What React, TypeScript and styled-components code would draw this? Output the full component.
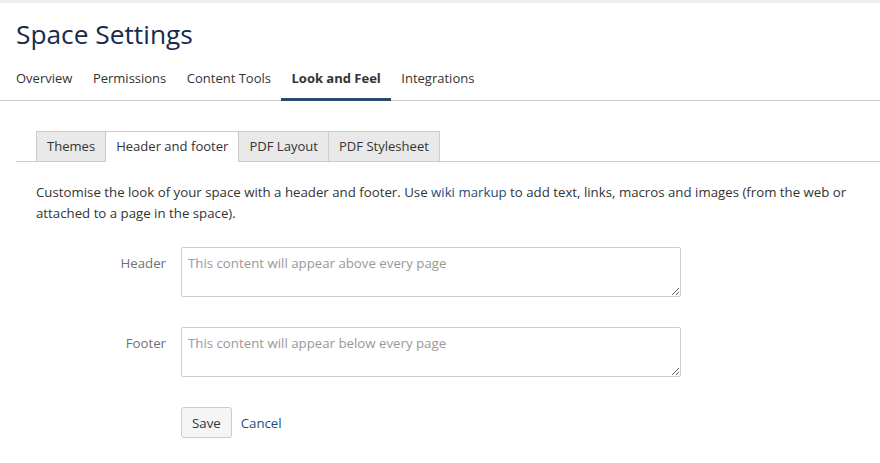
import styled, { createGlobalStyle } from "styled-components";

const GlobalStyle = createGlobalStyle`
  html, body {
    margin: 0;
    padding: 0;
    background: #fff;
  }
  body {
    font-family: "Open Sans", "Noto Sans", sans-serif;
    font-size: 13.25px;
    color: #333;
  }
`;

const Page = styled.div`
  border-top: 3px solid #ededed;
  min-height: 460px;
`;

const Title = styled.h1`
  margin: 0;
  padding: 14px 16px 0;
  font-size: 26.3px;
  font-weight: 400;
  color: #172b4d;
  line-height: 34px;
`;

const Nav = styled.nav`
  display: flex;
  gap: 20.5px;
  margin-top: 17px;
  padding: 0 16px;
  border-bottom: 1px solid #ccc;
  font-size: 13px;
`;

const NavItem = styled.a<{ $active?: boolean }>`
  display: block;
  padding: 0 ${(p) => (p.$active ? "10px" : "0")} 10px;
  margin: 0 ${(p) => (p.$active ? "-10px" : "0")};
  line-height: 20px;
  color: #333;
  font-weight: ${(p) => (p.$active ? 700 : 400)};
  border-bottom: 3px solid ${(p) => (p.$active ? "#2a4a6c" : "transparent")};
  margin-bottom: -1px;
  cursor: pointer;
`;

const Body = styled.div`
  padding: 30px 0 0 16px;
`;

const TabBar = styled.div`
  display: flex;
  padding-left: 20px;
  border-bottom: 1px solid #ccc;
  font-size: 13.05px;
`;

const Tab = styled.div<{ $active?: boolean }>`
  padding: 0 10px;
  line-height: 29px;
  background: ${(p) => (p.$active ? "#fff" : "#e9e9e9")};
  border: 1px solid #ccc;
  border-bottom: none;
  border-left-width: ${(p) => (p.$active ? "0" : "1px")};
  margin-bottom: ${(p) => (p.$active ? "-1px" : "0")};
  height: ${(p) => (p.$active ? "30px" : "29px")};
  color: #333;
  & + & {
    border-left: ${(p) => (p.$active ? "none" : "1px solid #ccc")};
  }
`;

const Content = styled.div`
  padding: 20px 20px 0;
`;

const Intro = styled.p`
  margin: 0;
  line-height: 21px;
  color: #333;
`;

const WikiLink = styled.a`
  color: #205081;
  text-decoration: none;
`;

const Form = styled.div`
  display: flex;
  flex-direction: column;
  gap: 30px;
  margin-top: 23px;
`;

const Row = styled.div`
  display: grid;
  grid-template-columns: 130px 500px;
  column-gap: 15px;
  align-items: start;
`;

const Label = styled.label`
  text-align: right;
  color: #707070;
  padding-top: 7px;
  line-height: 18px;
`;

const TextArea = styled.textarea`
  box-sizing: border-box;
  width: 500px;
  height: 50px;
  border: 1px solid #ccc;
  border-radius: 2px;
  padding: 6px 6px;
  font-family: inherit;
  font-size: 13.25px;
  color: #333;
  &::placeholder {
    color: #999;
  }
`;

const Actions = styled.div`
  display: flex;
  align-items: center;
  gap: 9px;
  margin-left: 145px;
  margin-top: 30px;
`;

const Button = styled.button`
  box-sizing: border-box;
  height: 31px;
  padding: 0 10px;
  background: #f5f5f5;
  border: 1px solid #ccc;
  border-radius: 3px;
  font-family: inherit;
  font-size: 13.25px;
  color: #333;
`;

const CancelLink = styled.a`
  color: #205081;
  text-decoration: none;
`;

const navItems = ["Overview", "Permissions", "Content Tools", "Look and Feel", "Integrations"];
const tabs = ["Themes", "Header and footer", "PDF Layout", "PDF Stylesheet"];

function App() {
  return (
    <Page>
      <GlobalStyle />
      <Title>Space Settings</Title>
      <Nav>
        {navItems.map((item) => (
          <NavItem key={item} $active={item === "Look and Feel"}>
            {item}
          </NavItem>
        ))}
      </Nav>
      <Body>
        <TabBar>
          {tabs.map((t) => (
            <Tab key={t} $active={t === "Header and footer"}>
              {t}
            </Tab>
          ))}
        </TabBar>
        <Content>
          <Intro>
            Customise the look of your space with a header and footer. Use{" "}
            <WikiLink>wiki markup</WikiLink> to add text, links, macros and images (from the web or
            attached to a page in the space).
          </Intro>
          <Form>
            <Row>
              <Label>Header</Label>
              <TextArea placeholder="This content will appear above every page" />
            </Row>
            <Row>
              <Label>Footer</Label>
              <TextArea placeholder="This content will appear below every page" />
            </Row>
          </Form>
          <Actions>
            <Button>Save</Button>
            <CancelLink>Cancel</CancelLink>
          </Actions>
        </Content>
      </Body>
    </Page>
  );
}

export default App;
